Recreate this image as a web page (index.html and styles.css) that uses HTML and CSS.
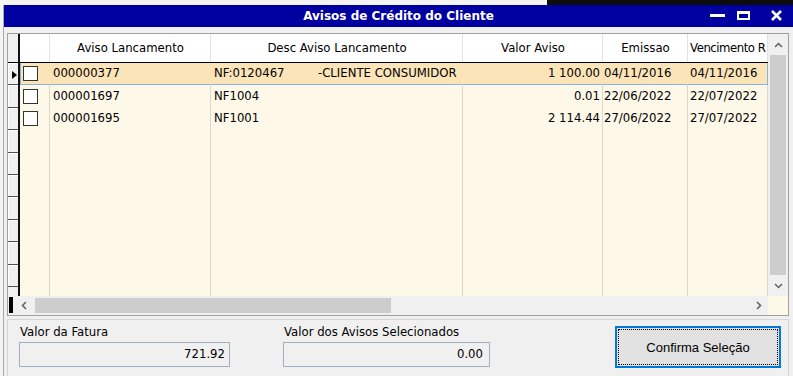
FILE: index.html
```html
<!DOCTYPE html>
<html lang="pt-BR">
<head>
    <meta charset="UTF-8">
    <title>Avisos de Crédito do Cliente</title>
    <link rel="stylesheet" href="styles.css">
</head>
<body>
    <div class="backdrop">
        <div class="backdrop-light"></div>
        <div class="backdrop-dark"></div>
    </div>

    <div class="screen-row">
        <div class="gutter"></div>

        <div class="window">
            <div class="titlebar">
                <span></span>
                <span class="title">Avisos de Crédito do Cliente</span>
                <svg class="controls" width="80" height="22" viewBox="0 0 80 22">
                    <rect x="4" y="9" width="15" height="3" fill="#fff"/>
                    <rect x="32" y="7" width="11" height="7" fill="none" stroke="#fff" stroke-width="2"/>
                    <rect x="31" y="6" width="13" height="3" fill="#fff"/>
                    <path d="M66 6 L75 15 M75 6 L66 15" stroke="#fff" stroke-width="2.6"/>
                </svg>
            </div>

            <div class="client">
                <div class="grid">
                    <!-- row indicator column -->
                    <div class="indicator">
                        <div class="ind-head"></div>
                        <div class="ind-cell">
                            <svg width="5" height="8" viewBox="0 0 5 8"><polygon points="0,0 5,4 0,8" fill="#000"/></svg>
                        </div>
                        <div class="ind-cell"></div>
                        <div class="ind-cell"></div>
                        <div class="ind-cell"></div>
                        <div class="ind-cell"></div>
                        <div class="ind-cell"></div>
                        <div class="ind-cell"></div>
                        <div class="ind-cell"></div>
                        <div class="ind-cell"></div>
                        <div class="ind-cell"></div>
                    </div>

                    <div class="data">
                        <div class="row head">
                            <div class="cell"></div>
                            <div class="cell">Aviso Lancamento</div>
                            <div class="cell">Desc Aviso Lancamento</div>
                            <div class="cell">Valor Aviso</div>
                            <div class="cell">Emissao</div>
                            <div class="cell venc-head">Vencimento R</div>
                        </div>

                        <div class="row selected">
                            <div class="cell check-cell"><span class="check"></span></div>
                            <div class="cell">000000377</div>
                            <div class="cell desc">NF:0120467         -CLIENTE CONSUMIDOR</div>
                            <div class="cell num">1 100.00</div>
                            <div class="cell date">04/11/2016</div>
                            <div class="cell date">04/11/2016</div>
                        </div>

                        <div class="row">
                            <div class="cell check-cell"><span class="check"></span></div>
                            <div class="cell">000001697</div>
                            <div class="cell desc">NF1004</div>
                            <div class="cell num">0.01</div>
                            <div class="cell date">22/06/2022</div>
                            <div class="cell date">22/07/2022</div>
                        </div>

                        <div class="row">
                            <div class="cell check-cell"><span class="check"></span></div>
                            <div class="cell">000001695</div>
                            <div class="cell desc">NF1001</div>
                            <div class="cell num">2 114.44</div>
                            <div class="cell date">27/06/2022</div>
                            <div class="cell date">27/07/2022</div>
                        </div>

                        <div class="row filler">
                            <div class="cell"></div>
                            <div class="cell"></div>
                            <div class="cell"></div>
                            <div class="cell"></div>
                            <div class="cell"></div>
                            <div class="cell"></div>
                        </div>
                    </div>

                    <div class="vscroll">
                        <div class="sbtn">
                            <svg width="9" height="6" viewBox="0 0 9 6"><polyline points="1,5 4.5,1.5 8,5" fill="none" stroke="#606060" stroke-width="1.5"/></svg>
                        </div>
                        <div class="vthumb"></div>
                        <div class="sbtn">
                            <svg width="9" height="6" viewBox="0 0 9 6"><polyline points="1,1 4.5,4.5 8,1" fill="none" stroke="#606060" stroke-width="1.5"/></svg>
                        </div>
                    </div>

                    <div class="hscroll-row">
                        <div class="hs-mark"></div>
                        <div class="hscroll">
                            <div class="hbtn left">
                                <svg width="6" height="9" viewBox="0 0 6 9"><polyline points="5,1 1.5,4.5 5,8" fill="none" stroke="#606060" stroke-width="1.5"/></svg>
                            </div>
                            <div class="hthumb"></div>
                            <div class="htrack"></div>
                            <div class="hbtn right">
                                <svg width="6" height="9" viewBox="0 0 6 9"><polyline points="1,1 4.5,4.5 1,8" fill="none" stroke="#606060" stroke-width="1.5"/></svg>
                            </div>
                        </div>
                        <div class="corner"></div>
                    </div>
                </div>

                <div class="footer">
                    <div class="field fatura">
                        <div class="field-label">Valor da Fatura</div>
                        <div class="field-box">721.92</div>
                    </div>
                    <div class="field selecionados">
                        <div class="field-label">Valor dos Avisos Selecionados</div>
                        <div class="field-box">0.00</div>
                    </div>
                    <button type="button" class="confirm">Confirma Seleção</button>
                </div>
            </div>
        </div>
    </div>
</body>
</html>
```

FILE: styles.css
```css
/* Base */
* {
    box-sizing: border-box;
}

body {
    margin: 0;
    width: 793px;
    height: 376px;
    overflow: hidden;
    background: #f0f0f0;
    font-family: "DejaVu Sans", Verdana, sans-serif;
    font-size: 11.7px;
    color: #000;
}

/* What shows behind the dialog */
.backdrop {
    display: flex;
    height: 5px;
}

.backdrop-light {
    width: 547px;
    background: #f4f4f4;
}

.backdrop-dark {
    flex: 1;
    background: #0c0c0c;
}

.screen-row {
    display: flex;
}

.gutter {
    width: 3px;
    height: 371px;
    background: #f4f4f4;
}

/* Dialog window */
.window {
    flex: 1;
    height: 371px;
    border-left: 1px solid #a8a8a8;
    background: #f0f0f0;
}

.titlebar {
    display: grid;
    grid-template-columns: 1fr auto 1fr;
    align-items: center;
    height: 22px;
    background: #0000a0;
    color: #fff;
}

.title {
    font-weight: bold;
    font-size: 12px;
}

.controls {
    justify-self: end;
    margin-right: 7px;
}

.client {
    padding: 6px 0 0 3px;
}

/* Data grid */
.grid {
    display: grid;
    grid-template-columns: 12px 748px 20px;
    grid-template-rows: 262px 19px;
    width: 782px;
    border: 1px solid #a0a0a0;
    background: #f0f0f0;
}

.indicator {
    display: flex;
    flex-direction: column;
    border-right: 2px solid #111;
    overflow: hidden;
}

.ind-head {
    height: 29px;
    flex: none;
    border-bottom: 1px solid #000;
}

.ind-cell {
    height: 22.4px;
    flex: none;
    display: flex;
    align-items: center;
    padding: 2px 0 0 4px;
    border-bottom: 1px solid #505050;
    box-shadow: inset 1px 1px 0 #fff;
}

.data {
    display: flex;
    flex-direction: column;
    background: #fef8e8;
    overflow: hidden;
}

.row {
    display: grid;
    grid-template-columns: 30px 161px 252px 140px 85px 80px;
    height: 22px;
    flex: none;
}

.cell {
    height: 100%;
    padding: 0 2px 0 3px;
    line-height: 22px;
    white-space: nowrap;
    overflow: hidden;
    border-right: 1px solid #dcd8cc;
}

.row.head {
    height: 29px;
    background: #fff;
    border-bottom: 1px solid #000;
}

.row.head .cell {
    line-height: 28px;
    text-align: center;
    border-right-color: #e3e3e3;
}

.row.head .venc-head {
    padding: 0 0 0 2px;
    text-align: left;
    letter-spacing: -0.45px;
}

.row.selected {
    background: #fce4b9;
}

.row.selected .cell {
    line-height: 21px;
    border-right-color: transparent;
    border-bottom: 1px solid #86b2df;
}

.row.selected .cell:first-child {
    border-left: 1px solid #86b2df;
}

.row.selected .cell:last-child {
    border-right-color: #86b2df;
}

.row.filler {
    flex: 1;
    height: auto;
}

.check-cell {
    display: flex;
    align-items: center;
    padding-left: 3px;
}

.row.selected .check-cell {
    padding-left: 2px;
}

.check {
    display: block;
    width: 15px;
    height: 15px;
    border: 1px solid #333;
    background: #fff;
}

.desc {
    white-space: pre;
}

.num {
    text-align: right;
    padding-right: 2px;
}

.date {
    padding-left: 1px;
}

.date:last-child {
    padding-left: 2px;
}

/* Scrollbars */
.vscroll {
    display: flex;
    flex-direction: column;
    background: #f0f0f0;
}

.sbtn {
    height: 21px;
    display: flex;
    align-items: center;
    justify-content: center;
}

.vthumb {
    flex: 1;
    margin: 0 2px;
    background: #cdcdcd;
}

.hscroll-row {
    grid-column: 1 / -1;
    display: flex;
}

.hs-mark {
    width: 4px;
    margin: 1px 0 2px 1px;
    background: #000;
}

.hscroll {
    display: flex;
    width: 755px;
    background: #f0f0f0;
}

.hbtn {
    display: flex;
    align-items: center;
    justify-content: center;
}

.hbtn.left {
    width: 22px;
}

.hbtn.right {
    width: 19px;
}

.hthumb {
    width: 356px;
    margin: 2px 0;
    background: #cdcdcd;
}

.htrack {
    flex: 1;
}

.corner {
    flex: 1;
    background: #fef8e8;
}

/* Totals panel */
.footer {
    display: flex;
    align-items: flex-start;
    width: 782px;
    height: 60px;
    margin-top: 3px;
    padding: 5px 0 0 11px;
    border: 1px solid #d6d6d6;
    border-bottom: none;
}

.field-label {
    line-height: 15px;
    padding-left: 1px;
}

.field-box {
    height: 25px;
    margin-top: 2px;
    padding-right: 4px;
    line-height: 23px;
    text-align: right;
    border: 1px solid #9fb0c2;
    background: #f0f0f0;
}

.fatura {
    width: 211px;
}

.selecionados {
    width: 207px;
    margin-left: 53px;
}

.selecionados .field-box {
    padding-right: 6px;
}

.confirm {
    width: 166px;
    height: 42px;
    margin: 1px 0 0 125px;
    padding: 0;
    font-family: "Liberation Sans", Arial, sans-serif;
    font-size: 13px;
    color: #000;
    background: #e1e1e1;
    border: 2px solid #0078d7;
    outline: 1px dotted #000;
    outline-offset: -4px;
}
```
